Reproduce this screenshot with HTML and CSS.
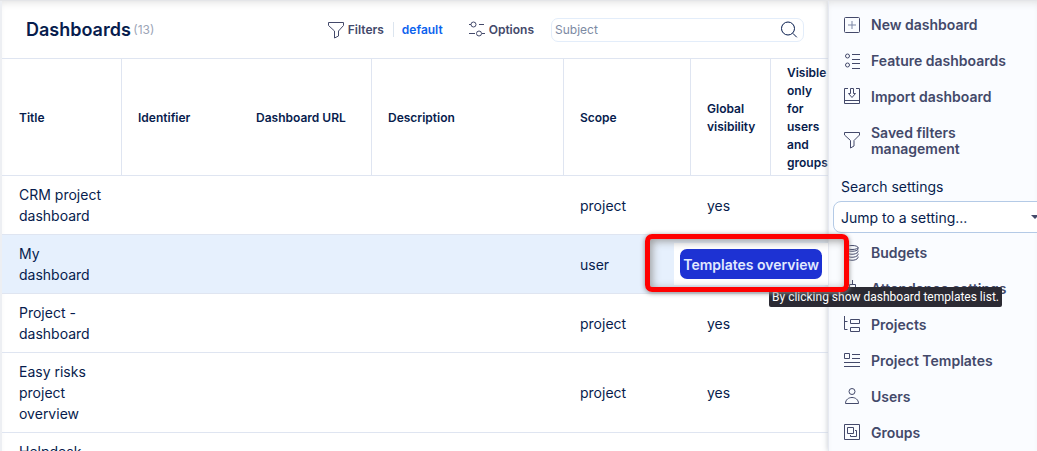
FILE: index.html
```html
<!DOCTYPE html>
<html lang="en">
<head>
    <meta charset="utf-8">
    <title>Dashboards</title>
    <link rel="stylesheet" href="styles.css">
</head>
<body>
    <div class="page">
        <main class="content">
            <div class="toolbar">
                <h1>Dashboards <span class="count">(13)</span></h1>
                <div class="tools">
                    <button class="tool">
                        <svg width="18" height="18" viewBox="0 0 18 18"><path d="M1.500 1.500h15v3l-5 5.500v5l-4 2v-7l-6-5.500z"/></svg>
                        Filters
                    </button>
                    <a class="default-filter" href="#">default</a>
                    <button class="tool options">
                        <svg width="18" height="18" viewBox="0 0 18 18"><path d="M1 3.500h2M11 3.500h5M1 12.500h6M14 12.500h3"/><circle cx="5.500" cy="3.500" r="2.500"/><circle cx="11" cy="12.500" r="2.500"/></svg>
                        Options
                    </button>
                </div>
                <form class="search">
                    <input type="text" placeholder="Subject" aria-label="Subject">
                    <button type="button" aria-label="Search">
                        <svg width="18" height="18" viewBox="0 0 18 18"><circle cx="8" cy="7.500" r="6.500"/><path d="M12.800 12.300l4 4"/></svg>
                    </button>
                </form>
            </div>

            <table class="list">
                <colgroup>
                    <col class="col-title">
                    <col class="col-identifier">
                    <col class="col-url">
                    <col>
                    <col class="col-scope">
                    <col class="col-global">
                    <col class="col-visible">
                </colgroup>
                <thead>
                    <tr>
                        <th>Title</th>
                        <th class="no-line">Identifier</th>
                        <th>Dashboard URL</th>
                        <th>Description</th>
                        <th>Scope</th>
                        <th>Global visibility</th>
                        <th class="no-line">Visible only for users and groups</th>
                    </tr>
                </thead>
                <tbody>
                    <tr><td>CRM project dashboard</td><td></td><td></td><td></td><td>project</td><td>yes</td><td></td></tr>
                    <tr class="active"><td>My dashboard</td><td></td><td></td><td></td><td>user</td><td></td><td></td></tr>
                    <tr><td>Project - dashboard</td><td></td><td></td><td></td><td>project</td><td>yes</td><td></td></tr>
                    <tr><td>Easy risks project overview</td><td></td><td></td><td></td><td>project</td><td>yes</td><td></td></tr>
                    <tr><td>Helpdesk dashboard</td><td></td><td></td><td></td><td></td><td></td><td></td></tr>
                </tbody>
            </table>
        </main>

        <aside class="sidebar">
            <nav class="menu">
                <a href="#">
                    <svg width="18" height="18" viewBox="0 0 18 18"><rect x="1.500" y="1.500" width="15" height="15" rx="1"/><path class="soft" d="M9 5v8M5 9h8"/></svg>
                    New dashboard
                </a>
                <a href="#">
                    <svg width="18" height="18" viewBox="0 0 18 18"><circle cx="4.500" cy="4" r="2"/><circle cx="4.500" cy="13" r="2"/><path d="M9 2.500h8M9 7.500h8M9 11.500h8M9 16.500h8"/></svg>
                    Feature dashboards
                </a>
                <a href="#">
                    <svg width="18" height="18" viewBox="0 0 18 18"><path d="M5 .5H1.500v15h15v-15H13M1.500 12.500h15M7.500 .5h3v5h2L9 9.500 5.500 5.500h2z"/></svg>
                    Import dashboard
                </a>
                <a href="#">
                    <svg width="18" height="18" viewBox="0 0 18 18"><path d="M1.500 .5h15v2.500l-5.500 5.500v5.500l-3.500 2v-7.500l-6-5.500z"/></svg>
                    Saved filters management
                </a>
            </nav>

            <div class="jump">
                <label for="jump">Search settings</label>
                <div class="select-wrap">
                    <select id="jump"><option>Jump to a setting...</option></select>
                </div>
            </div>

            <nav class="menu">
                <a href="#">
                    <svg width="18" height="18" viewBox="0 0 18 18"><ellipse cx="9" cy="3.500" rx="6" ry="2"/><path d="M3 3.500v1.500c0 3 12 3 12 0v-1.500M3 6.500c-1 5 13 5 12 0M3 9.500c-1 5 13 5 12 0M3 12.500c-1 5 13 5 12 0"/></svg>
                    Budgets
                </a>
                <a href="#">
                    <svg width="18" height="18" viewBox="0 0 18 18"><path d="M9.500 0v4.500M6.500 9v-4.500h6V9M2.500 16.500V9h13v7.500z"/></svg>
                    Attendance settings
                </a>
                <a href="#">
                    <svg width="18" height="18" viewBox="0 0 18 18"><path d="M1.500 0v13.500h3M1.500 5.500h3M7.500 3.500h9v4h-9zM7.500 11.500h9v4h-9z"/></svg>
                    Projects
                </a>
                <a href="#">
                    <svg width="18" height="18" viewBox="0 0 18 18"><path d="M1.500 1.500h5v5h-5zM9 2.500h8M9 6.500h8M1 10.500h16M1 14.500h16"/></svg>
                    Project Templates
                </a>
                <a href="#">
                    <svg width="18" height="18" viewBox="0 0 18 18"><circle cx="9" cy="3.500" r="3"/><path d="M2.500 15.500c0-8 13-8 13 0z"/></svg>
                    Users
                </a>
                <a href="#">
                    <svg width="18" height="18" viewBox="0 0 18 18"><path d="M1.500 .5h15v15h-15zM4.500 3.500h6v6h-6zM12 6.500h1.500v6h-6V11"/></svg>
                    Groups
                </a>
            </nav>
        </aside>

        <div class="action">
            <button class="primary" aria-describedby="templates-tip">Templates overview</button>
        </div>
        <div class="tooltip" id="templates-tip" role="tooltip">By clicking show dashboard templates list.</div>
        <div class="highlight"></div>
    </div>
</body>
</html>
```

FILE: styles.css
```css
* {
    box-sizing: border-box;
}
body {
    margin: 0;
    font-family: Inter, "Liberation Sans", sans-serif;
    font-size: 14px;
    color: #071c4d;
    background: #fff;
}
button, input, select {
    font: inherit;
    color: inherit;
}
svg {
    flex: none;
    fill: none;
    stroke: currentColor;
}
.page {
    position: relative;
    display: flex;
    height: 100vh;
    overflow: hidden;
    border-top: 1px solid #e4e5e8;
}
.content {
    flex: 1;
    min-width: 0;
    overflow: hidden;
    border-left: 2px solid #edeff3;
    box-shadow: inset 0 6px 9px -5px #ddd;
}
.toolbar {
    display: flex;
    align-items: center;
    height: 57px;
    padding: 0 24px;
}
h1 {
    flex: 1;
    margin: 0;
    font-size: 18px;
    font-weight: 600;
}
.count {
    margin-left: -2px;
    font-size: 12px;
    font-weight: 400;
    color: #9ba5b7;
    vertical-align: 2px;
}
.tools {
    display: flex;
    align-items: center;
    font-size: 12px;
    font-weight: 600;
}
.tool {
    display: flex;
    align-items: center;
    gap: 3px;
    padding: 0;
    border: 0;
    background: none;
    color: #43496a;
    cursor: pointer;
}
.options {
    margin-left: 25px;
}
.default-filter {
    margin-left: 9px;
    padding-left: 8px;
    border-left: 1px solid #dce5ef;
    color: #0b62ee;
    text-decoration: none;
}
.search {
    display: flex;
    align-items: center;
    width: 253px;
    height: 24px;
    margin-left: 17px;
    border: 1px solid #e3edfa;
    border-radius: 7px;
}
.search input {
    flex: 1;
    min-width: 0;
    padding: 0 3px;
    border: 0;
    outline: 0;
    background: none;
    font-size: 12px;
}
.search input::placeholder {
    color: #7d8aa3;
}
.search button {
    display: flex;
    padding: 0 5px;
    border: 0;
    background: none;
}
.list {
    width: 100%;
    table-layout: fixed;
    border-collapse: separate;
    border-spacing: 0;
    border-top: 1px solid #dfe5f1;
}
.col-title {
    width: 120px;
}
.col-identifier {
    width: 118px;
}
.col-url {
    width: 132px;
}
.col-scope {
    width: 127px;
}
.col-global {
    width: 80px;
}
.col-visible {
    width: 57px;
}
th, td {
    padding: 8px 16px;
    border-bottom: 1px solid #dfe5f1;
    text-align: left;
    line-height: 21px;
    vertical-align: middle;
}
th {
    padding: 5px 16px 3px;
    border-right: 1px solid #dfe5f1;
    font-size: 12px;
    font-weight: 600;
    line-height: 18px;
}
th:first-child, td:first-child {
    padding-left: 17px;
    padding-right: 15px;
}
.no-line {
    border-right: 0;
}
.active td {
    background: #e6f0fd;
}
.sidebar {
    flex: none;
    width: 209px;
    padding-top: 6px;
    overflow: hidden;
    background: #fafcff;
    border-left: 1px solid #e6e9f1;
    box-shadow: 0 0 6px #c8ccd4, inset 0 6px 8px -5px #ddd;
}
.menu a {
    display: flex;
    align-items: center;
    gap: 10px;
    padding: 10px 30px 10px 14px;
    color: #43496a;
    font-weight: 600;
    line-height: 16px;
    text-decoration: none;
}
.menu svg {
    margin: -1px 0;
}
.soft {
    stroke: #7b86a5;
}
.jump label {
    display: block;
    padding: 10px 12px 4px;
    line-height: 20px;
}
.select-wrap {
    position: relative;
    margin: 0 -12px 2px 4px;
}
.select-wrap::after {
    content: "";
    position: absolute;
    top: 14px;
    right: 10px;
    border: 4px solid transparent;
    border-top-color: #43496a;
    border-bottom: 0;
}
select {
    display: block;
    width: 100%;
    height: 32px;
    padding: 0 7px;
    appearance: none;
    border: 1px solid #b4cae6;
    border-radius: 8px;
    background: #fff;
}
/* floating button with its hint */
.action {
    position: absolute;
    top: 242px;
    right: 209px;
    padding: 6px;
    background: #fff;
}
.primary {
    display: block;
    height: 30px;
    padding: 0 3px;
    border: 0;
    border-radius: 7px;
    background: #1d32d3;
    color: #e1e9ff;
    font-weight: 600;
    cursor: pointer;
}
.highlight {
    position: absolute;
    top: 233px;
    right: 188px;
    width: 204px;
    height: 58px;
    border: 5px solid #f00;
    border-radius: 7px;
    box-shadow: 0 1px 5px #888, inset 2px 2px 8px #999;
    pointer-events: none;
}
.tooltip {
    position: absolute;
    top: 286px;
    right: 35px;
    padding: 0 3px;
    background: #2b2a33;
    border-radius: 2px;
    color: #fff;
    font-family: Roboto, "Open Sans", sans-serif;
    font-size: 12px;
    line-height: 20px;
    white-space: nowrap;
}
```
